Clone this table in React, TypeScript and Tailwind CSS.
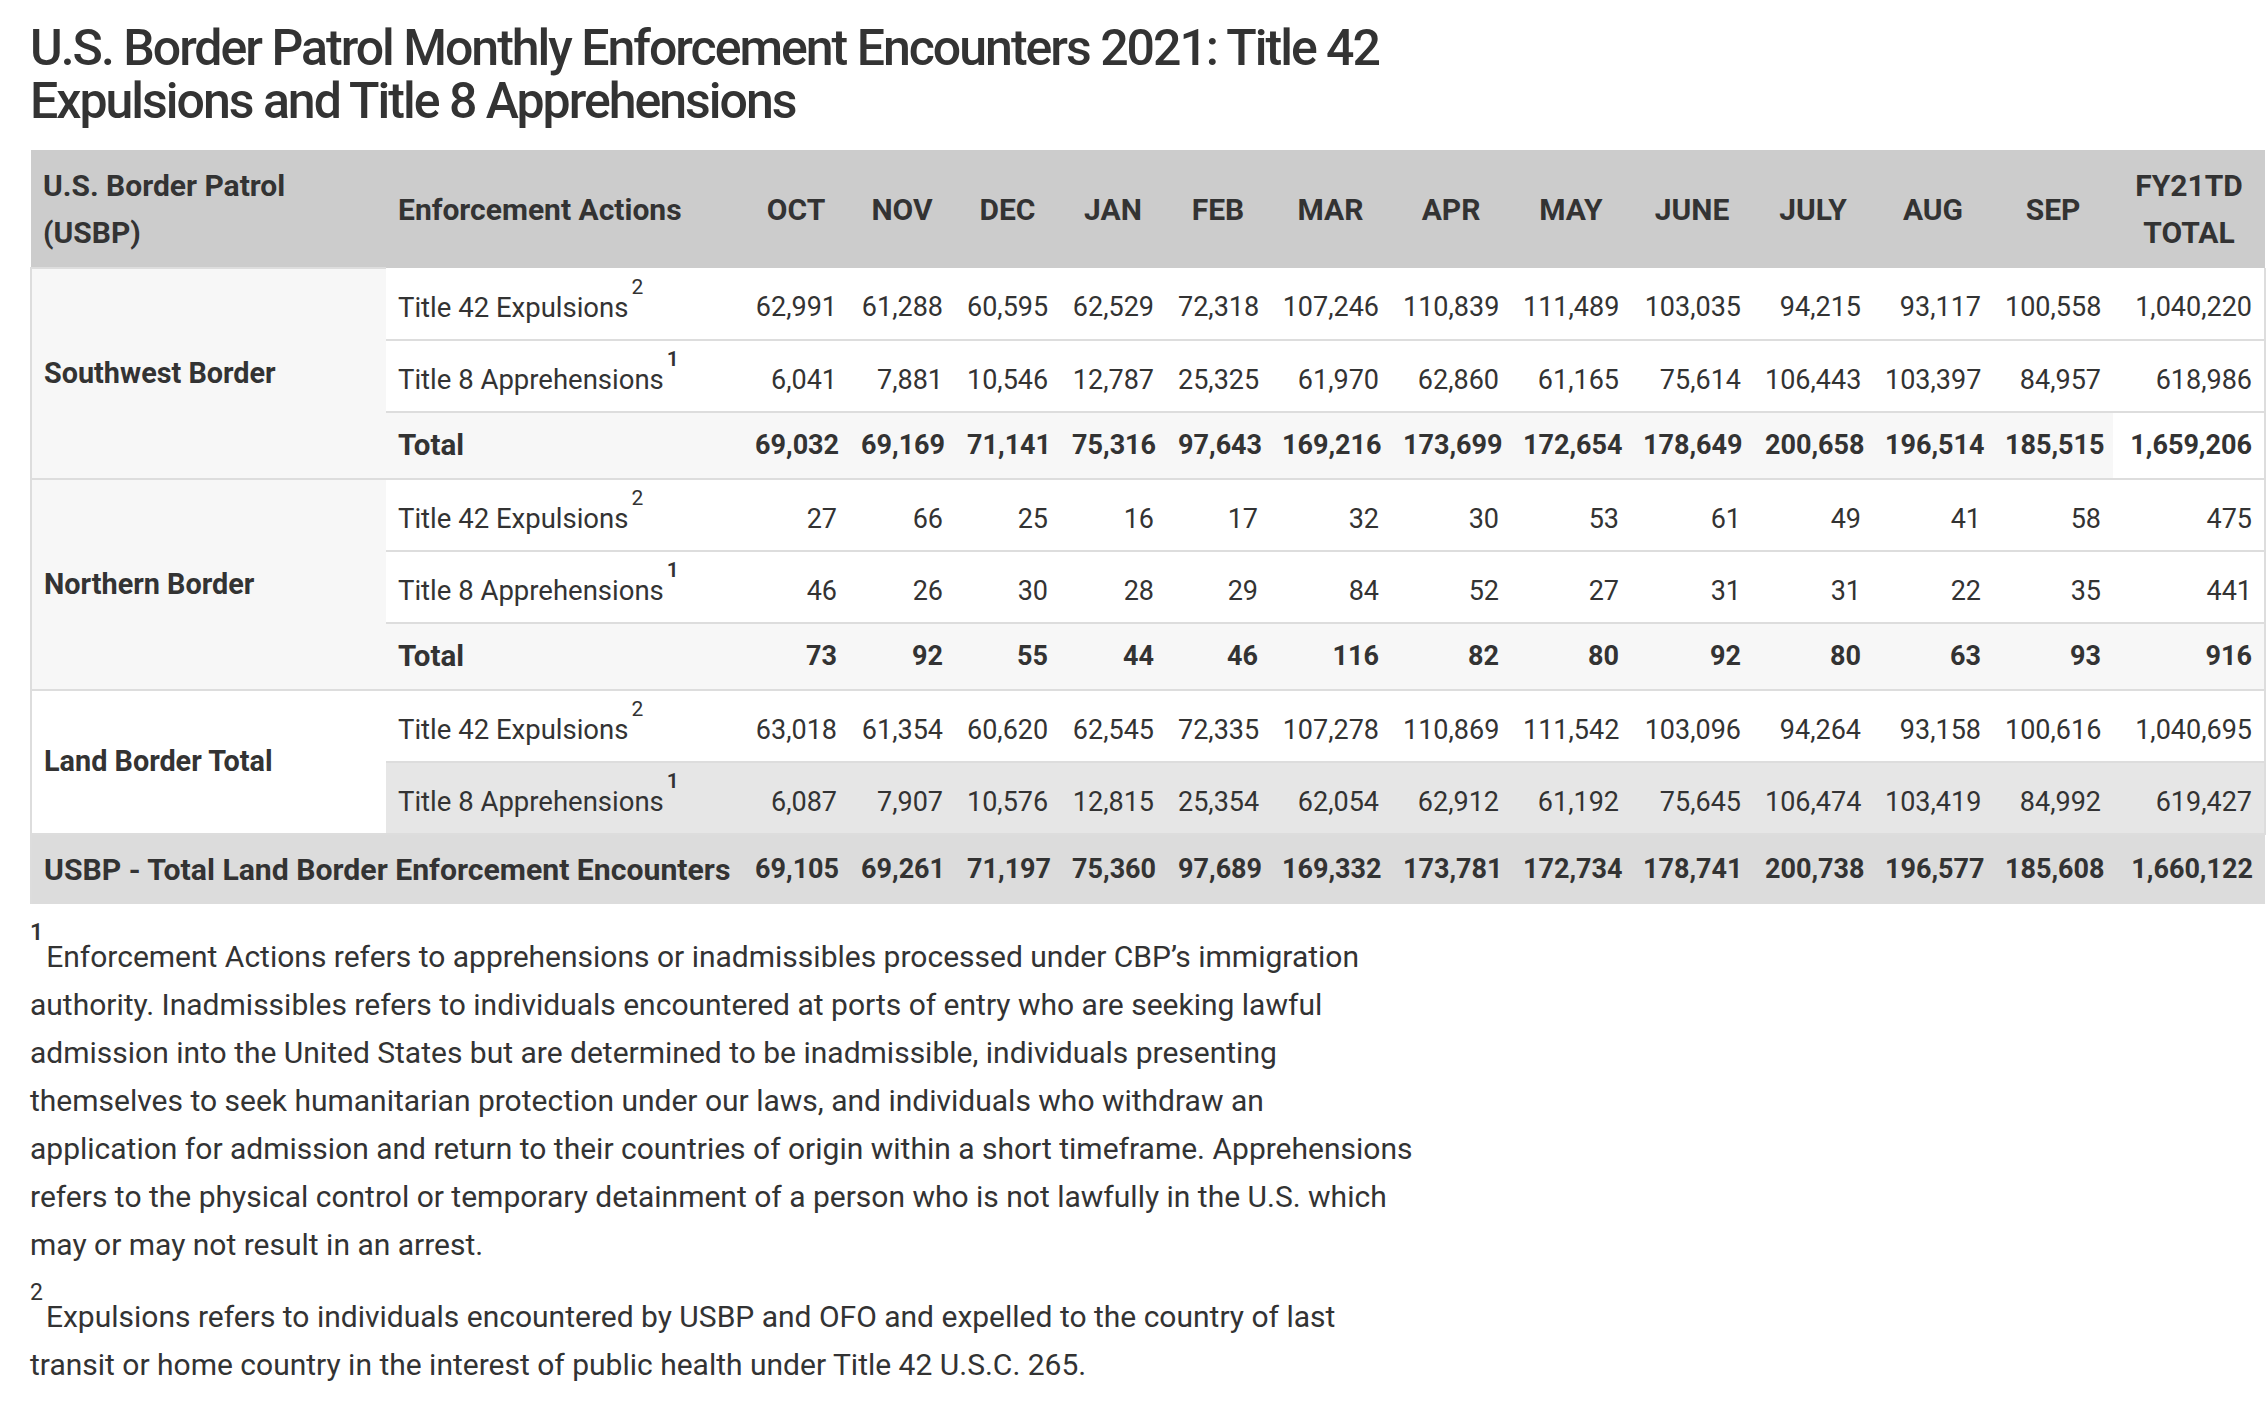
import React from "react";

const months = ["OCT", "NOV", "DEC", "JAN", "FEB", "MAR", "APR", "MAY", "JUNE", "JULY", "AUG", "SEP"];

const colWidths = [
  "w-[355px]",
  "w-[357px]",
  "w-[106px]",
  "w-[106px]",
  "w-[105px]",
  "w-[106px]",
  "w-[104px]",
  "w-[121px]",
  "w-[120px]",
  "w-[120px]",
  "w-[122px]",
  "w-[120px]",
  "w-[120px]",
  "w-[120px]",
  "w-[152px]",
];

type Line = {
  label: string;
  sup?: "1" | "2";
  values: string[];
  total?: boolean;
};

type Group = {
  name: string;
  nameBg: string;
  lines: Line[];
};

const groups: Group[] = [
  {
    name: "Southwest Border",
    nameBg: "bg-[#f7f7f7]",
    lines: [
      {
        label: "Title 42 Expulsions",
        sup: "2",
        values: ["62,991", "61,288", "60,595", "62,529", "72,318", "107,246", "110,839", "111,489", "103,035", "94,215", "93,117", "100,558", "1,040,220"],
      },
      {
        label: "Title 8 Apprehensions",
        sup: "1",
        values: ["6,041", "7,881", "10,546", "12,787", "25,325", "61,970", "62,860", "61,165", "75,614", "106,443", "103,397", "84,957", "618,986"],
      },
      {
        label: "Total",
        total: true,
        values: ["69,032", "69,169", "71,141", "75,316", "97,643", "169,216", "173,699", "172,654", "178,649", "200,658", "196,514", "185,515", "1,659,206"],
      },
    ],
  },
  {
    name: "Northern Border",
    nameBg: "bg-[#f7f7f7]",
    lines: [
      {
        label: "Title 42 Expulsions",
        sup: "2",
        values: ["27", "66", "25", "16", "17", "32", "30", "53", "61", "49", "41", "58", "475"],
      },
      {
        label: "Title 8 Apprehensions",
        sup: "1",
        values: ["46", "26", "30", "28", "29", "84", "52", "27", "31", "31", "22", "35", "441"],
      },
      {
        label: "Total",
        total: true,
        values: ["73", "92", "55", "44", "46", "116", "82", "80", "92", "80", "63", "93", "916"],
      },
    ],
  },
  {
    name: "Land Border Total",
    nameBg: "bg-white",
    lines: [
      {
        label: "Title 42 Expulsions",
        sup: "2",
        values: ["63,018", "61,354", "60,620", "62,545", "72,335", "107,278", "110,869", "111,542", "103,096", "94,264", "93,158", "100,616", "1,040,695"],
      },
      {
        label: "Title 8 Apprehensions",
        sup: "1",
        values: ["6,087", "7,907", "10,576", "12,815", "25,354", "62,054", "62,912", "61,192", "75,645", "106,474", "103,419", "84,992", "619,427"],
      },
    ],
  },
];

const grandTotal = ["69,105", "69,261", "71,197", "75,360", "97,689", "169,332", "173,781", "172,734", "178,741", "200,738", "196,577", "185,608", "1,660,122"];

function Sup({ n }: { n: string }) {
  return (
    <sup className={`top-[-23px] ml-[3px] text-[21px] ${n === "1" ? "font-semibold" : "font-normal"}`}>{n}</sup>
  );
}

function lineBg(group: Group, li: number, line: Line) {
  if (group.name === "Land Border Total" && li === 1) return "bg-[#e6e6e6]";
  if (line.total) return "bg-[#f7f7f7]";
  return "bg-white";
}

export default function App() {
  return (
    <div className="min-h-screen bg-white pl-[30px] pt-[22px] text-[#333] font-['Roboto',sans-serif]">
      <h1 className="text-[50px] leading-[53px] font-medium tracking-[-2px] text-[#333]">
        U.S. Border Patrol Monthly Enforcement Encounters 2021: Title 42
        <br />
        Expulsions and Title 8 Apprehensions
      </h1>

      <table className="mt-[22px] w-[2234px] table-fixed border-collapse text-[27px]">
        <colgroup>
          {colWidths.map((w, i) => (
            <col key={i} className={w} />
          ))}
        </colgroup>
        <thead>
          <tr className="h-[118px] bg-[#cccccc] text-[30px] leading-[47px]">
            <th className="px-3 text-left align-middle font-bold">
              U.S. Border Patrol
              <br />
              (USBP)
            </th>
            <th className="px-3 text-left align-middle font-bold">Enforcement Actions</th>
            {months.map((m) => (
              <th key={m} className="px-1 text-center align-middle font-bold">
                {m}
              </th>
            ))}
            <th className="px-1 text-center align-middle font-bold">
              FY21TD
              <br />
              TOTAL
            </th>
          </tr>
        </thead>
        <tbody>
          {groups.map((g) =>
            g.lines.map((line, li) => {
              const bg = lineBg(g, li, line);
              const rowH = line.total ? "h-[67px]" : "h-[72px]";
              return (
                <tr key={g.name + li} className={rowH}>
                  {li === 0 && (
                    <td
                      rowSpan={g.lines.length}
                      className={`border-2 border-r-0 border-[#dddddd] px-3 align-middle text-[28.8px] font-bold ${g.nameBg}`}
                    >
                      {g.name}
                    </td>
                  )}
                  <td
                    className={`border-b-2 border-[#dddddd] px-3 align-middle ${bg} ${
                      line.total ? "text-[29.5px] font-bold" : "pt-[8px] text-[27.5px]"
                    }`}
                  >
                    {line.label}
                    {line.sup && <Sup n={line.sup} />}
                  </td>
                  {line.values.map((v, vi) => {
                    const isFy = vi === line.values.length - 1;
                    const cellBg = g.name === "Southwest Border" && line.total && isFy ? "bg-white" : bg;
                    return (
                      <td
                        key={vi}
                        className={`border-b-2 border-[#dddddd] px-3 text-right align-middle ${cellBg} ${
                          line.total ? "font-bold" : "pt-[8px]"
                        } ${isFy ? "border-r-2" : ""}`}
                      >
                        {v}
                      </td>
                    );
                  })}
                </tr>
              );
            }),
          )}
          <tr className="h-[70px] bg-[#dcdcdc] font-bold">
            <td colSpan={2} className="border-l-2 border-[#dddddd] px-3 align-middle whitespace-nowrap text-[30.2px]">
              USBP - Total Land Border Enforcement Encounters
            </td>
            {grandTotal.map((v, i) => (
              <td key={i} className="px-3 text-right align-middle">
                {v}
              </td>
            ))}
          </tr>
        </tbody>
      </table>

      <div className="mt-[29px] w-[1460px] text-[30px] leading-[48px]">
        <p>
          <sup className="top-[-27px] text-[23px] font-semibold">1</sup>
          <span className="ml-[3px]">Enforcement Actions refers to apprehensions or inadmissibles processed under CBP’s immigration</span>
          <br />
          authority. Inadmissibles refers to individuals encountered at ports of entry who are seeking lawful
          <br />
          admission into the United States but are determined to be inadmissible, individuals presenting
          <br />
          themselves to seek humanitarian protection under our laws, and individuals who withdraw an
          <br />
          application for admission and return to their countries of origin within a short timeframe. Apprehensions
          <br />
          refers to the physical control or temporary detainment of a person who is not lawfully in the U.S. which
          <br />
          may or may not result in an arrest.
        </p>
        <p className="mt-[24px]">
          <sup className="top-[-27px] text-[23px] font-normal">2</sup>
          <span className="ml-[3px]">Expulsions refers to individuals encountered by USBP and OFO and expelled to the country of last</span>
          <br />
          transit or home country in the interest of public health under Title 42 U.S.C. 265.
        </p>
      </div>
    </div>
  );
}
